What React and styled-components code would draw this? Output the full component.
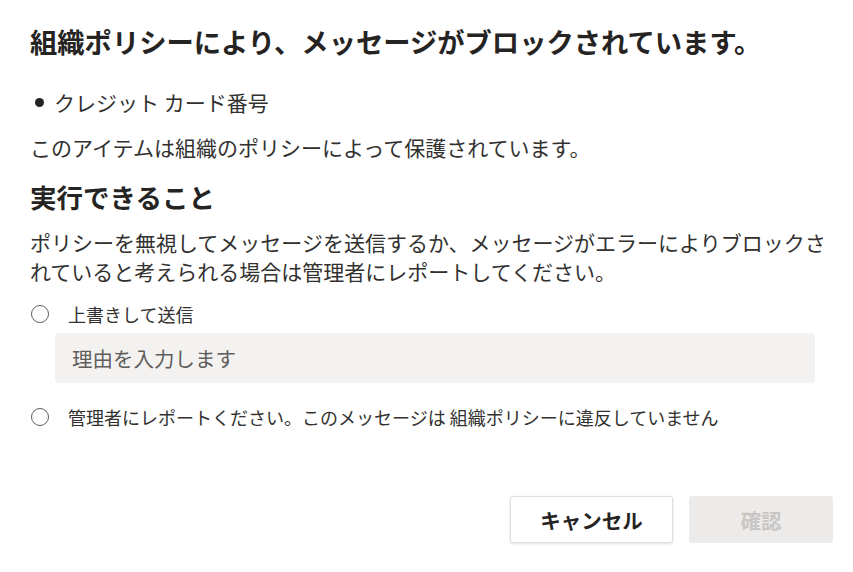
import React, { useState } from "react";
import styled, { createGlobalStyle } from "styled-components";

const GlobalStyle = createGlobalStyle`
  html, body {
    margin: 0;
    padding: 0;
    background: #ffffff;
  }
  body {
    font-family: "Noto Sans CJK JP", "Noto Sans", sans-serif;
    color: #323130;
  }
`;

const Dialog = styled.div`
  width: 853px;
  height: 572px;
  box-sizing: border-box;
  padding: 22px 20px 29px 30px;
  display: flex;
  flex-direction: column;
`;

const Title = styled.h1`
  margin: 0;
  font-size: 27.3px;
  font-weight: 700;
  line-height: 38px;
  color: #252423;
  white-space: nowrap;
`;

const List = styled.ul`
  margin: 27px 0 0;
  padding: 0 0 0 5px;
  list-style: none;
`;

const Item = styled.li`
  display: flex;
  align-items: center;
  gap: 10px;
  font-size: 21px;
  line-height: 30px;
  &::before {
    content: "";
    width: 9px;
    height: 9px;
    border-radius: 50%;
    background: #252423;
  }
`;

const Text = styled.p`
  margin: ${(p) => p.$top || 0}px 0 0;
  font-size: 21px;
  line-height: 29px;
`;

const Heading = styled.h2`
  margin: 16px 0 0;
  font-size: 26.5px;
  font-weight: 700;
  line-height: 38px;
  color: #252423;
`;

const Options = styled.div`
  margin-top: 15px;
  display: flex;
  flex-direction: column;
`;

const Option = styled.label`
  display: flex;
  align-items: center;
  gap: 19px;
  padding-left: 1px;
  font-size: 18px;
  line-height: 26px;
  cursor: pointer;
  margin-top: ${(p) => p.$top || 0}px;
`;

const Radio = styled.span`
  width: 18px;
  height: 18px;
  box-sizing: border-box;
  border-radius: 50%;
  border: 1px solid ${(p) => (p.$on ? "#0078d4" : "#605e5c")};
  display: flex;
  align-items: center;
  justify-content: center;
  flex-shrink: 0;
  &::after {
    content: "";
    width: 10px;
    height: 10px;
    border-radius: 50%;
    background: ${(p) => (p.$on ? "#0078d4" : "transparent")};
  }
`;

const Reason = styled.input`
  margin: 6px 18px 0 25px;
  height: 50px;
  box-sizing: border-box;
  border: none;
  border-radius: 4px;
  background: #f3f2f1;
  padding: 0 17px;
  font-family: inherit;
  font-size: 20.5px;
  color: #323130;
  outline: none;
  &::placeholder {
    color: #605e5c;
  }
`;

const Footer = styled.div`
  margin-top: auto;
  display: flex;
  justify-content: flex-end;
  gap: 16px;
`;

const Button = styled.button`
  height: 47px;
  width: ${(p) => p.$w}px;
  box-sizing: border-box;
  border-radius: 3px;
  font-family: inherit;
  font-size: 20.5px;
  font-weight: 700;
  border: 1px solid ${(p) => (p.$primary ? "transparent" : "#e1dfdd")};
  background: ${(p) => (p.$primary ? "#edebe9" : "#ffffff")};
  color: ${(p) => (p.$primary ? "#c8c6c4" : "#252423")};
  box-shadow: ${(p) => (p.$primary ? "none" : "0 1px 3px rgba(0,0,0,0.12)")};
  cursor: ${(p) => (p.$primary ? "default" : "pointer")};
`;

export default function App() {
  const [choice, setChoice] = useState(null);
  return (
    <>
      <GlobalStyle />
      <Dialog>
        <Title>組織ポリシーにより、メッセージがブロックされています。</Title>
        <List>
          <Item>クレジット カード番号</Item>
        </List>
        <Text $top={16}>このアイテムは組織のポリシーによって保護されています。</Text>
        <Heading>実行できること</Heading>
        <Text $top={12}>
          ポリシーを無視してメッセージを送信するか、メッセージがエラーによりブロックされていると考えられる場合は管理者にレポートしてください。
        </Text>
        <Options>
          <Option onClick={() => setChoice("override")}>
            <Radio $on={choice === "override"} />
            上書きして送信
          </Option>
          <Reason placeholder="理由を入力します" />
          <Option $top={21} onClick={() => setChoice("report")}>
            <Radio $on={choice === "report"} />
            管理者にレポートください。このメッセージは 組織ポリシーに違反していません
          </Option>
        </Options>
        <Footer>
          <Button $w={163}>キャンセル</Button>
          <Button $w={144} $primary disabled>
            確認
          </Button>
        </Footer>
      </Dialog>
    </>
  );
}
